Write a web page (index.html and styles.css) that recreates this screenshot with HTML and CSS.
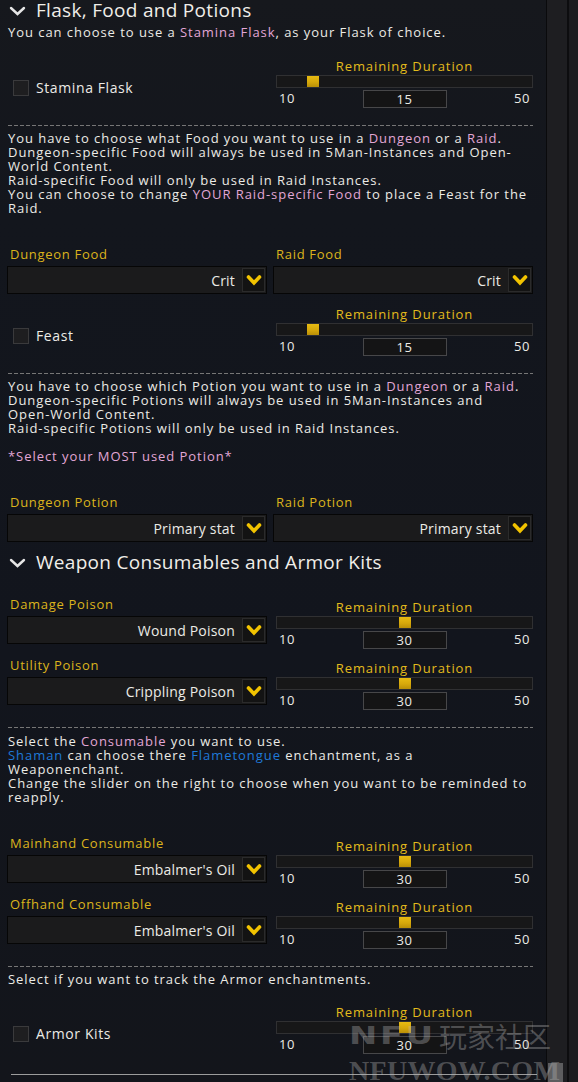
FILE: index.html
```html
<!DOCTYPE html>
<html lang="en">
<head>
<meta charset="utf-8">
<title>Consumables Options</title>
<link rel="stylesheet" href="styles.css">
</head>
<body>
<div class="frame">
  <main class="panel">
    <h2 class="group-title">
      <svg class="caret" width="17" height="10" viewBox="0 0 17 10"><polyline points="2,2 8.5,8 15,2" fill="none" stroke="#e6e6e6" stroke-width="2.4" stroke-linecap="round" stroke-linejoin="miter"/></svg>
      <span>Flask, Food and Potions</span>
    </h2>
    <p class="desc gap-5">You can choose to use a <span class="pink">Stamina Flask</span>, as your Flask of choice.</p>

    <div class="pair gap-19">
      <label class="check"><span class="box"></span><span>Stamina Flask</span></label>
      <div class="slider">
        <div class="slider-label">Remaining Duration</div>
        <div class="track"><div class="rail"><span class="thumb" style="left:12.5%"></span></div></div>
        <div class="slider-values"><span class="min">10</span><span class="value">15</span><span class="max">50</span></div>
      </div>
    </div>

    <div class="dash"></div>
    <p class="desc gap-5">You have to choose what Food you want to use in a <span class="pink">Dungeon</span> or a <span class="pink">Raid</span>.<br>Dungeon-specific Food will always be used in 5Man-Instances and Open-<br>World Content.<br>Raid-specific Food will only be used in Raid Instances.<br>You can choose to change <span class="pink">YOUR Raid-specific Food</span> to place a Feast for the<br>Raid.</p>

    <div class="pair gap-31">
      <div class="field">
        <div class="field-label">Dungeon Food</div>
        <div class="dropdown"><span class="dd-text">Crit</span><span class="dd-btn"><svg width="16" height="12" viewBox="0 0 16 12"><polyline points="2.5,3 8,8.8 13.5,3" fill="none" stroke="#f2c300" stroke-width="3.6" stroke-linecap="round" stroke-linejoin="miter"/></svg></span></div>
      </div>
      <div class="field">
        <div class="field-label">Raid Food</div>
        <div class="dropdown"><span class="dd-text">Crit</span><span class="dd-btn"><svg width="16" height="12" viewBox="0 0 16 12"><polyline points="2.5,3 8,8.8 13.5,3" fill="none" stroke="#f2c300" stroke-width="3.6" stroke-linecap="round" stroke-linejoin="miter"/></svg></span></div>
      </div>
    </div>

    <div class="pair gap-12">
      <label class="check"><span class="box"></span><span>Feast</span></label>
      <div class="slider">
        <div class="slider-label">Remaining Duration</div>
        <div class="track"><div class="rail"><span class="thumb" style="left:12.5%"></span></div></div>
        <div class="slider-values"><span class="min">10</span><span class="value">15</span><span class="max">50</span></div>
      </div>
    </div>

    <div class="dash"></div>
    <p class="desc gap-5">You have to choose which Potion you want to use in a <span class="pink">Dungeon</span> or a <span class="pink">Raid</span>.<br>Dungeon-specific Potions will always be used in 5Man-Instances and<br>Open-World Content.<br>Raid-specific Potions will only be used in Raid Instances.<br><br><span class="pink">*Select your MOST used Potion*</span></p>

    <div class="pair gap-31">
      <div class="field">
        <div class="field-label">Dungeon Potion</div>
        <div class="dropdown"><span class="dd-text">Primary stat</span><span class="dd-btn"><svg width="16" height="12" viewBox="0 0 16 12"><polyline points="2.5,3 8,8.8 13.5,3" fill="none" stroke="#f2c300" stroke-width="3.6" stroke-linecap="round" stroke-linejoin="miter"/></svg></span></div>
      </div>
      <div class="field">
        <div class="field-label">Raid Potion</div>
        <div class="dropdown"><span class="dd-text">Primary stat</span><span class="dd-btn"><svg width="16" height="12" viewBox="0 0 16 12"><polyline points="2.5,3 8,8.8 13.5,3" fill="none" stroke="#f2c300" stroke-width="3.6" stroke-linecap="round" stroke-linejoin="miter"/></svg></span></div>
      </div>
    </div>

    <h2 class="group-title gap-10">
      <svg class="caret" width="17" height="10" viewBox="0 0 17 10"><polyline points="2,2 8.5,8 15,2" fill="none" stroke="#e6e6e6" stroke-width="2.4" stroke-linecap="round" stroke-linejoin="miter"/></svg>
      <span>Weapon Consumables and Armor Kits</span>
    </h2>

    <div class="pair weapon gap-24">
      <div class="field">
        <div class="field-label">Damage Poison</div>
        <div class="dropdown"><span class="dd-text">Wound Poison</span><span class="dd-btn"><svg width="16" height="12" viewBox="0 0 16 12"><polyline points="2.5,3 8,8.8 13.5,3" fill="none" stroke="#f2c300" stroke-width="3.6" stroke-linecap="round" stroke-linejoin="miter"/></svg></span></div>
      </div>
      <div class="slider">
        <div class="slider-label">Remaining Duration</div>
        <div class="track"><div class="rail"><span class="thumb" style="left:50%"></span></div></div>
        <div class="slider-values"><span class="min">10</span><span class="value">30</span><span class="max">50</span></div>
      </div>
    </div>

    <div class="pair weapon gap-9">
      <div class="field">
        <div class="field-label">Utility Poison</div>
        <div class="dropdown"><span class="dd-text">Crippling Poison</span><span class="dd-btn"><svg width="16" height="12" viewBox="0 0 16 12"><polyline points="2.5,3 8,8.8 13.5,3" fill="none" stroke="#f2c300" stroke-width="3.6" stroke-linecap="round" stroke-linejoin="miter"/></svg></span></div>
      </div>
      <div class="slider">
        <div class="slider-label">Remaining Duration</div>
        <div class="track"><div class="rail"><span class="thumb" style="left:50%"></span></div></div>
        <div class="slider-values"><span class="min">10</span><span class="value">30</span><span class="max">50</span></div>
      </div>
    </div>

    <div class="dash"></div>
    <p class="desc gap-6">Select the <span class="pink">Consumable</span> you want to use.<br><span class="blue">Shaman</span> can choose there <span class="blue">Flametongue</span> enchantment, as a<br>Weaponenchant.<br>Change the slider on the right to choose when you want to be reminded to<br>reapply.</p>

    <div class="pair weapon gap-31">
      <div class="field">
        <div class="field-label">Mainhand Consumable</div>
        <div class="dropdown"><span class="dd-text">Embalmer's Oil</span><span class="dd-btn"><svg width="16" height="12" viewBox="0 0 16 12"><polyline points="2.5,3 8,8.8 13.5,3" fill="none" stroke="#f2c300" stroke-width="3.6" stroke-linecap="round" stroke-linejoin="miter"/></svg></span></div>
      </div>
      <div class="slider">
        <div class="slider-label">Remaining Duration</div>
        <div class="track"><div class="rail"><span class="thumb" style="left:50%"></span></div></div>
        <div class="slider-values"><span class="min">10</span><span class="value">30</span><span class="max">50</span></div>
      </div>
    </div>

    <div class="pair weapon gap-9">
      <div class="field">
        <div class="field-label">Offhand Consumable</div>
        <div class="dropdown"><span class="dd-text">Embalmer's Oil</span><span class="dd-btn"><svg width="16" height="12" viewBox="0 0 16 12"><polyline points="2.5,3 8,8.8 13.5,3" fill="none" stroke="#f2c300" stroke-width="3.6" stroke-linecap="round" stroke-linejoin="miter"/></svg></span></div>
      </div>
      <div class="slider">
        <div class="slider-label">Remaining Duration</div>
        <div class="track"><div class="rail"><span class="thumb" style="left:50%"></span></div></div>
        <div class="slider-values"><span class="min">10</span><span class="value">30</span><span class="max">50</span></div>
      </div>
    </div>

    <div class="dash"></div>
    <p class="desc gap-5">Select if you want to track the Armor enchantments.</p>

    <div class="pair gap-18">
      <label class="check"><span class="box"></span><span>Armor Kits</span></label>
      <div class="slider">
        <div class="slider-label">Remaining Duration</div>
        <div class="track"><div class="rail"><span class="thumb" style="left:50%"></span></div></div>
        <div class="slider-values"><span class="min">10</span><span class="value">30</span><span class="max">50</span></div>
      </div>
    </div>

    <div class="bottom-rule"></div>
  </main>

  <aside class="scroll">
    <div class="scroll-track"><span class="scroll-thumb"></span></div>
  </aside>

  <div class="watermark">
    <div class="wm-top"><span class="wm-logo-box"><span class="wm-logo">NFU</span></span><span class="wm-cn">玩家社区</span></div>
    <div class="wm-url">NFUWOW.COM</div>
  </div>
</div>
</body>
</html>
```

FILE: styles.css
```css
* { box-sizing: border-box; }

html, body {
  margin: 0;
  padding: 0;
}

body {
  background: #14161b;
  font-family: "Open Sans", "DejaVu Sans", sans-serif;
  font-size: 13px;
  color: #ecebe6;
  overflow: hidden;
}

.frame {
  position: relative;
  display: flex;
  width: 578px;
  height: 1082px;
  overflow: hidden;
}

.panel {
  width: 546px;
  flex: none;
  padding: 0 13px 0 7px;
  background: linear-gradient(180deg, #16181d 0%, #13161d 20%, #12151d 60%, #13151b 100%);
}

/* spacing helpers for the flow */
.gap-5 { margin-top: 5px; }
.gap-6 { margin-top: 6px; }
.gap-9 { margin-top: 9px; }
.gap-10 { margin-top: 10px; }
.gap-12 { margin-top: 12px; }
.gap-18 { margin-top: 18px; }
.gap-19 { margin-top: 19px; }
.gap-24 { margin-top: 24px; }
.gap-31 { margin-top: 31px; }

.group-title {
  display: flex;
  align-items: center;
  height: 20px;
  margin-bottom: 0;
  font-size: 19px;
  line-height: 20px;
  font-weight: 400;
  letter-spacing: 0.3px;
  color: #f0eee9;
  white-space: nowrap;
}
.group-title:first-child { margin-top: 0; }

.caret {
  flex: none;
  margin-left: 2px;
  margin-right: 10px;
  margin-top: 2px;
}

.desc {
  margin-bottom: 0;
  padding-left: 1px;
  line-height: 14px;
  letter-spacing: 0.95px;
  white-space: nowrap;
}

.pink { color: #e2a7d6; }
.blue { color: #1f79d8; }

.pair {
  display: grid;
  grid-template-columns: 260px 260px;
  column-gap: 6px;
  align-items: start;
}

.dash {
  margin-top: 18px;
  height: 1px;
  margin-left: 1px;
  background: repeating-linear-gradient(90deg, #767676 0 4px, transparent 4px 6px);
}

/* checkbox */
.check {
  display: flex;
  align-items: center;
  gap: 7px;
  padding-left: 6px;
  padding-top: 22px;
  font-size: 14px;
  line-height: 16px;
  letter-spacing: 0.6px;
  color: #ecebe6;
}
.box {
  width: 16px;
  height: 16px;
  flex: none;
  background: #1e1e20;
  border: 1px solid #3a3a3c;
}

/* fields with dropdown */
.field-label {
  height: 16px;
  line-height: 16px;
  padding-left: 3px;
  letter-spacing: 0.7px;
  color: #dcb41c;
}
.dropdown {
  margin-top: 4px;
  height: 28px;
  display: flex;
  align-items: center;
  justify-content: flex-end;
  padding: 1px;
  background: #1b1b1c;
  border: 1px solid #060606;
}
.dd-text {
  margin-right: 7px;
  font-size: 14px;
  color: #ecebe6;
  letter-spacing: 0.2px;
}
.dd-btn {
  width: 23px;
  height: 24px;
  display: flex;
  align-items: center;
  justify-content: center;
  background: #131313;
  border: 1px solid #2b2b2b;
}

/* slider */
.slider {
  margin-left: 3px;
  width: 257px;
}
.weapon .slider { margin-top: 3px; }

.slider-label {
  height: 16px;
  line-height: 16px;
  text-align: center;
  letter-spacing: 0.9px;
  color: #e3bb1c;
}
.track {
  margin-top: 1px;
  height: 13px;
  background: #171718;
  border: 1px solid #303032;
  position: relative;
}
.rail {
  position: absolute;
  top: 0;
  bottom: 0;
  left: 6px;
  right: 6px;
}
.thumb {
  position: absolute;
  top: 0;
  bottom: 0;
  width: 12px;
  margin-left: -6px;
  background: linear-gradient(180deg, #e7bb12 0%, #d6a80b 55%, #b98f07 100%);
}
.slider-values {
  margin-top: 2px;
  display: grid;
  grid-template-columns: 1fr 84px 1fr;
  height: 17px;
  line-height: 16px;
  letter-spacing: 0.6px;
}
.slider-values .min { padding-left: 3px; }
.slider-values .max { padding-right: 3px; text-align: right; }
.slider-values .value {
  text-align: center;
  background: #141415;
  border: 1px solid #474749;
  line-height: 16px;
}

.bottom-rule {
  margin-top: 21px;
  margin-left: 4px;
  margin-right: -4px;
  height: 1px;
  background: #9c9c9c;
}

/* scrollbar column */
.scroll {
  flex: 1;
  background: #1c1c1f;
  border-left: 1px solid #0a0a0c;
}
.scroll-track {
  position: relative;
  width: 22px;
  height: 100%;
  background: #1e1e21;
  border-right: 2px solid #0d0d0f;
}
.scroll-thumb {
  position: absolute;
  left: 1px;
  bottom: 0;
  width: 15px;
  height: 19px;
  background: #5d5d5f;
}

/* watermark overlay */
.watermark {
  position: absolute;
  left: 349px;
  top: 1020px;
  width: 214px;
  color: rgba(185, 185, 185, 0.36);
  pointer-events: none;
}
.wm-top {
  display: flex;
  align-items: center;
  height: 32px;
}
.wm-logo-box {
  display: inline-block;
  width: 90px;
  flex: none;
}
.wm-logo {
  display: inline-block;
  font-family: "DejaVu Sans", sans-serif;
  font-weight: bold;
  font-size: 25px;
  letter-spacing: 2px;
  line-height: 32px;
  transform: scaleX(1.35);
  transform-origin: left center;
}
.wm-cn {
  font-family: "Noto Sans CJK SC", sans-serif;
  font-size: 28px;
  line-height: 32px;
}
.wm-url {
  margin-top: 4px;
  font-family: "Liberation Serif", serif;
  font-weight: bold;
  font-size: 28px;
  line-height: 30px;
  letter-spacing: 0.3px;
  white-space: nowrap;
}
```
